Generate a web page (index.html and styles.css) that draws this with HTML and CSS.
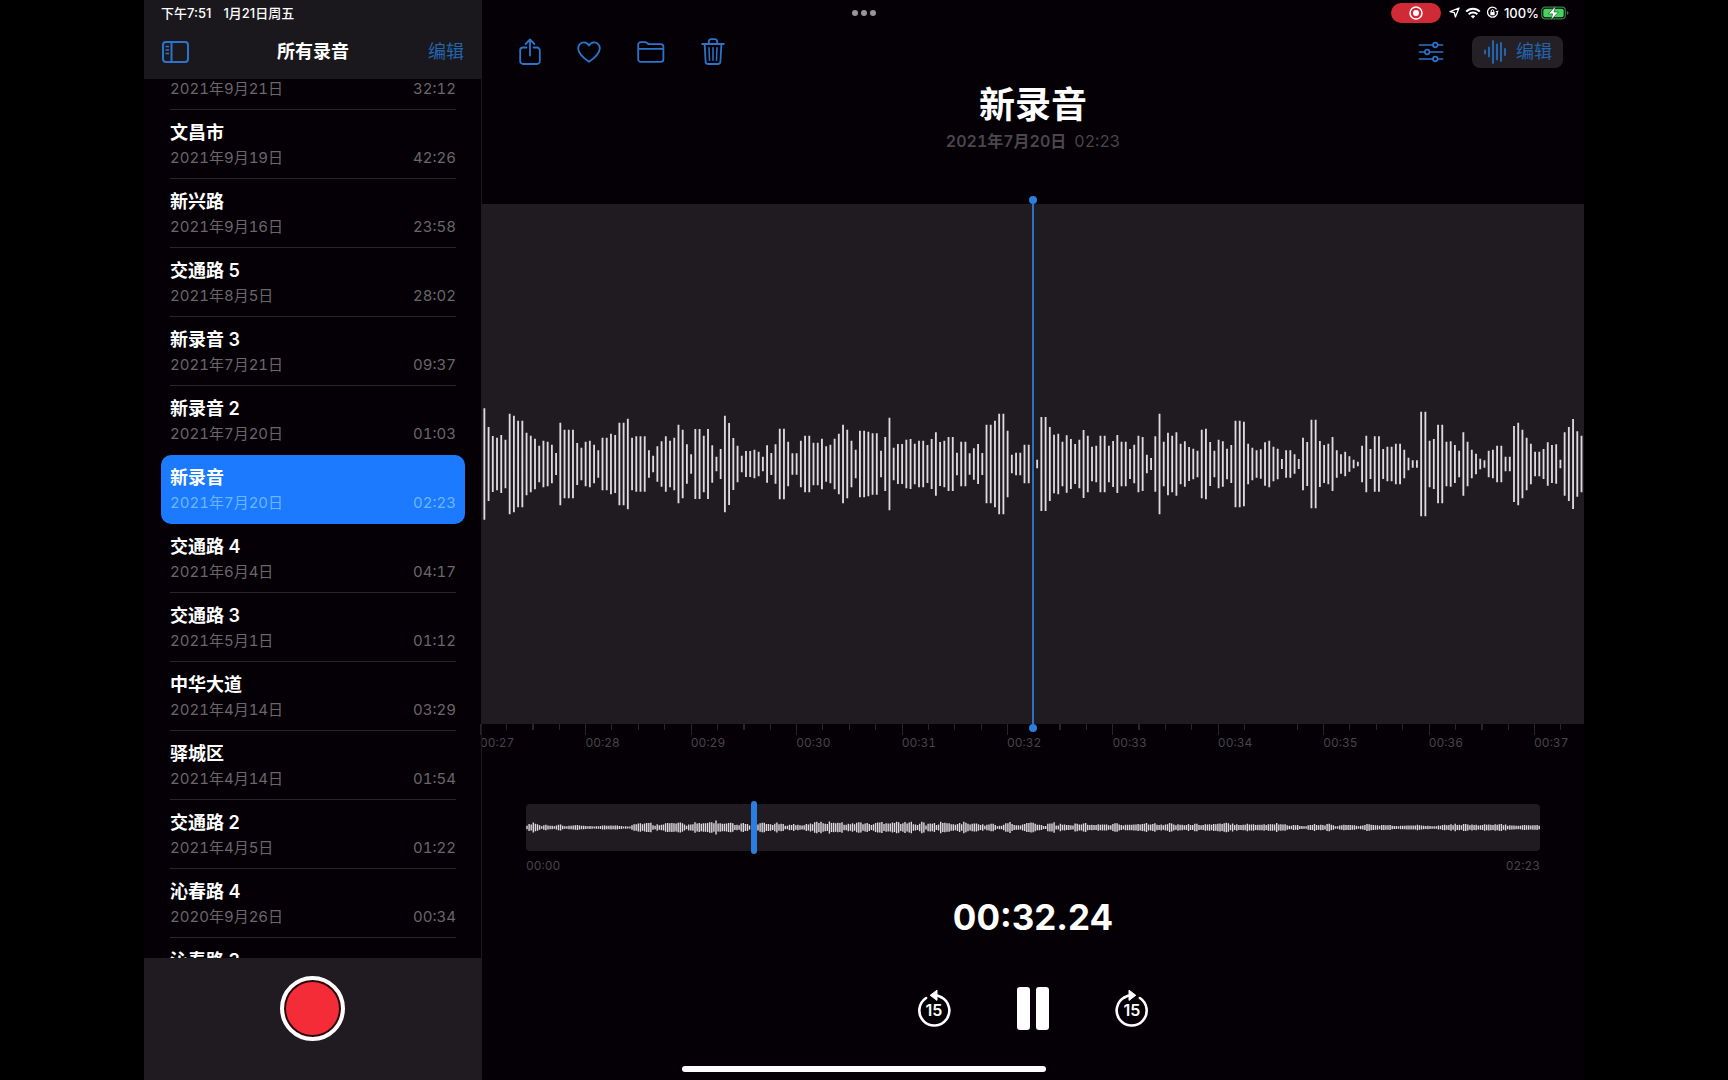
FILE: index.html
```html
<!DOCTYPE html>
<html lang="zh-CN">
<head>
<meta charset="utf-8">
<meta name="viewport" content="width=device-width, initial-scale=1">
<title>语音备忘录</title>
<link rel="stylesheet" href="styles.css">
</head>
<body>
<div class="device">
  <aside class="sidebar">
    <header class="sidebar-head">
      <div class="status"><span>下午7:51</span><span>1月21日周五</span></div>
      <div class="nav">
        <button class="icon-btn" aria-label="边栏">
          <svg width="28" height="22" viewBox="0 0 28 22" fill="none" stroke="currentColor" stroke-width="2"><rect x="1" y="1" width="25" height="20" rx="3"/><path d="M9.500 1v20"/><path d="M3.500 5.500h3.500M3.500 9h3.500M3.500 12.500h3.500" stroke-width="1.500"/></svg>
        </button>
        <h2 class="nav-title">所有录音</h2>
        <button class="text-btn">编辑</button>
      </div>
    </header>
    <ul class="list">
      <li class="row row-cut"><button class="rec"><span class="meta"><span>2021年9月21日</span><span>32:12</span></span></button></li>
      <li class="row"><button class="rec"><strong>文昌市</strong><span class="meta"><span>2021年9月19日</span><span>42:26</span></span></button></li>
      <li class="row"><button class="rec"><strong>新兴路</strong><span class="meta"><span>2021年9月16日</span><span>23:58</span></span></button></li>
      <li class="row"><button class="rec"><strong>交通路 5</strong><span class="meta"><span>2021年8月5日</span><span>28:02</span></span></button></li>
      <li class="row"><button class="rec"><strong>新录音 3</strong><span class="meta"><span>2021年7月21日</span><span>09:37</span></span></button></li>
      <li class="row row-plain"><button class="rec"><strong>新录音 2</strong><span class="meta"><span>2021年7月20日</span><span>01:03</span></span></button></li>
      <li class="row row-plain selected"><button class="rec"><strong>新录音</strong><span class="meta"><span>2021年7月20日</span><span>02:23</span></span></button></li>
      <li class="row"><button class="rec"><strong>交通路 4</strong><span class="meta"><span>2021年6月4日</span><span>04:17</span></span></button></li>
      <li class="row"><button class="rec"><strong>交通路 3</strong><span class="meta"><span>2021年5月1日</span><span>01:12</span></span></button></li>
      <li class="row"><button class="rec"><strong>中华大道</strong><span class="meta"><span>2021年4月14日</span><span>03:29</span></span></button></li>
      <li class="row"><button class="rec"><strong>驿城区</strong><span class="meta"><span>2021年4月14日</span><span>01:54</span></span></button></li>
      <li class="row"><button class="rec"><strong>交通路 2</strong><span class="meta"><span>2021年4月5日</span><span>01:22</span></span></button></li>
      <li class="row"><button class="rec"><strong>沁春路 4</strong><span class="meta"><span>2020年9月26日</span><span>00:34</span></span></button></li>
      <li class="row"><button class="rec"><strong>沁春路 3</strong></button></li>
    </ul>
    <footer class="sidebar-foot">
      <button class="record" aria-label="录音"></button>
    </footer>
  </aside>

  <main class="main">
    <div class="status status-right">
      <span class="rec-pill"><svg width="14" height="14" viewBox="0 0 14 14"><circle cx="7" cy="7" r="6" fill="none" stroke="#fff" stroke-width="1.500"/><circle cx="7" cy="7" r="3" fill="#fff"/></svg></span>
      <svg width="11" height="11" viewBox="0 0 11 11" fill="none" stroke="#fff" stroke-width="1.300" stroke-linejoin="round"><path d="M10 1 6.400 10 5.300 5.700 1 4.700z"/></svg>
      <svg width="16" height="12" viewBox="0 0 16 12" fill="none" stroke="#fff" stroke-width="2"><path d="M1.200 4.600a9.600 9.600 0 0 1 13.600 0M3.700 7.200a6.100 6.100 0 0 1 8.600 0"/><path d="M8 11.600 5.800 9.300a3.100 3.100 0 0 1 4.400 0z" fill="#fff" stroke="none"/></svg>
      <svg width="13" height="13" viewBox="0 0 13 13" fill="none" stroke="#fff" stroke-width="1.300"><path d="M10.600 3.300A5 5 0 1 0 11.500 6.500"/><path d="M12.700 4.600 11.500 7.300 9.400 5.200z" fill="#fff" stroke="none"/><rect x="4.300" y="6" width="4.400" height="3.200" rx=".5" fill="#fff" stroke="none"/><path d="M5.200 6V5a1.300 1.300 0 0 1 2.600 0v1" stroke-width="1"/></svg>
      <span>100%</span>
      <svg class="battery" width="28" height="14" viewBox="0 0 28 14"><rect x=".7" y="1.200" width="23.600" height="11.600" rx="3.500" fill="none" stroke="#3f7a4c" stroke-width="1.200"/><rect x="2.300" y="2.800" width="20.400" height="8.400" rx="2" fill="#43d35f"/><path d="M25.800 5v4c1.200-.5 1.700-1.200 1.700-2s-.5-1.500-1.700-2z" fill="#3f7a4c"/><path d="M14.600 0 7.300 7.900h4.300L10 14l7.500-8h-4.400z" fill="#fff" stroke="#1d3b24" stroke-width=".6"/></svg>
    </div>
    <nav class="toolbar">
      <button class="icon-btn" aria-label="共享"><svg width="22" height="28" viewBox="0 0 22 28" fill="none" stroke="currentColor" stroke-width="1.800" stroke-linecap="round" stroke-linejoin="round"><path d="M7.500 9.500H4A2.800 2.800 0 0 0 1.200 12.300v10.900A2.800 2.800 0 0 0 4 26h14a2.800 2.800 0 0 0 2.800-2.800V12.300A2.800 2.800 0 0 0 18 9.500h-3.500"/><path d="M11 17.500V2M6.600 6 11 1.500 15.400 6"/></svg></button>
      <button class="icon-btn" aria-label="喜爱"><svg width="24" height="22" viewBox="0 0 24 22" fill="none" stroke="currentColor" stroke-width="1.800" stroke-linejoin="round"><path d="M12 20.800C6 16.500 1.200 12.600 1.200 7.400 1.200 3.900 3.700 1.300 6.900 1.300c2.200 0 4 1.200 5.100 3.200 1.100-2 2.900-3.200 5.100-3.200 3.200 0 5.700 2.600 5.700 6.100 0 5.200-4.800 9.100-10.800 13.400z"/></svg></button>
      <button class="icon-btn" aria-label="文件夹"><svg width="28" height="22" viewBox="0 0 28 22" fill="none" stroke="currentColor" stroke-width="1.800" stroke-linejoin="round"><path d="M1.200 7.800V3.800A2.600 2.600 0 0 1 3.800 1.200h4.400c1.900 0 2.300 2 4.200 2h11.400a2.600 2.600 0 0 1 2.600 2.600v12.400a2.600 2.600 0 0 1-2.600 2.600H3.800a2.600 2.600 0 0 1-2.600-2.600zM1.200 7.800h25.200"/></svg></button>
      <button class="icon-btn" aria-label="删除"><svg width="24" height="28" viewBox="0 0 24 28" fill="none" stroke="currentColor" stroke-width="1.800" stroke-linecap="round" stroke-linejoin="round"><path d="M1.200 6h21.600M3.600 6l1 17.500A2.600 2.600 0 0 0 7.200 26h9.600a2.600 2.600 0 0 0 2.600-2.500l1-17.500"/><path d="M7.800 6V3.400A2.200 2.200 0 0 1 10 1.200h4a2.200 2.200 0 0 1 2.200 2.200V6"/><path d="m8 9.800.5 12.500M12 9.800v12.500m4-12.500-.5 12.500" stroke-width="1.500"/></svg></button>
      <span class="spacer"></span>
      <button class="icon-btn" aria-label="选项"><svg width="26" height="22" viewBox="0 0 26 22" fill="none" stroke="currentColor" stroke-width="1.700" stroke-linecap="round"><path d="M1.500 4h13.200M20 4h4.500M1.500 11h5M11.700 11h12.800M1.500 18h13.200M20 18h4.500"/><circle cx="17.300" cy="4" r="2.300"/><circle cx="9.100" cy="11" r="2.300"/><circle cx="17.300" cy="18" r="2.300"/></svg></button>
      <button class="edit-btn"><svg width="24" height="26" viewBox="0 0 24 26" fill="none" stroke="currentColor" stroke-width="2" stroke-linecap="round"><path d="M2 11.500v3M6 8.500v9M10 2v22M14 5.500v15M18 4v18M22 10v6"/></svg>编辑</button>
    </nav>

    <section class="heading">
      <h1>新录音</h1>
      <p><b>2021年7月20日</b><span>02:23</span></p>
    </section>

    <section class="wave">
      <svg id="wave" viewBox="0 0 3306 340" role="img" aria-label="波形"></svg>
      <i class="playhead"></i>
    </section>
    <div class="ruler">
      <span>00:27</span><span>00:28</span><span>00:29</span><span>00:30</span><span>00:31</span><span>00:32</span><span>00:33</span><span>00:34</span><span>00:35</span><span>00:36</span><span>00:37</span>
    </div>

    <section class="overview">
      <div class="track">
        <svg id="overview" viewBox="0 0 1014 20" role="img" aria-label="总览"></svg>
        <i class="thumb"></i>
      </div>
      <div class="range"><span>00:00</span><span>02:23</span></div>
    </section>

    <div class="clock">00:32.24</div>
    <div class="controls">
      <button class="ctl" aria-label="后退15秒"><svg width="36" height="40" viewBox="0 1 36 40"><path d="M25.200 9.200A15 15 0 1 1 10.100 10" fill="none" stroke="#fff" stroke-width="2.600" stroke-linecap="round"/><path d="M14.200 7.300 21 2.200v10.200z" fill="#fff" stroke="#fff" stroke-linejoin="round"/><path d="M18 7.300c3 0 5.500.8 7.500 2" fill="none" stroke="#fff" stroke-width="2.600" stroke-linecap="round"/><text x="18" y="28" text-anchor="middle">15</text></svg></button>
      <button class="ctl" aria-label="暂停"><svg width="34" height="44" viewBox="0 0 34 44" fill="#fff"><rect x="1" y="0" width="13" height="43" rx="3"/><rect x="20" y="0" width="13" height="43" rx="3"/></svg></button>
      <button class="ctl" aria-label="前进15秒"><svg width="36" height="40" viewBox="0 1 36 40"><path d="M10.800 9.200A15 15 0 1 0 25.900 10" fill="none" stroke="#fff" stroke-width="2.600" stroke-linecap="round"/><path d="M21.800 7.300 15 2.200v10.200z" fill="#fff" stroke="#fff" stroke-linejoin="round"/><path d="M18 7.300c-3 0-5.500.8-7.500 2" fill="none" stroke="#fff" stroke-width="2.600" stroke-linecap="round"/><text x="18" y="28" text-anchor="middle">15</text></svg></button>
    </div>
  </main>
  <span class="dots"><i></i><i></i><i></i></span>
  <span class="home-bar"></span>
</div>
<script src="wave.js"></script>
</body>
</html>
```
FILE: styles.css
```css
* { box-sizing: border-box; }
html { background: #000; }
body {
  margin: 0;
  background: #000;
  color: #fff;
  font-family: Inter, "Noto Sans CJK SC", sans-serif;
  font-size: 15px;
  line-height: 24px;
}
button {
  margin: 0;
  padding: 0;
  border: 0;
  background: none;
  color: inherit;
  font: inherit;
}
svg { display: block; flex: none; }
h1, h2, p, ul { margin: 0; padding: 0; }

.device {
  position: relative;
  display: grid;
  grid-template-columns: 338px minmax(0, 1fr);
  width: calc(100vh * 4 / 3);
  max-width: 100%;
  height: 100vh;
  margin: 0 auto;
  overflow: hidden;
  background: #040005;
}

/* Sidebar */
.sidebar {
  z-index: 1;
  display: flex;
  flex-direction: column;
  min-height: 0;
  border-right: 1px solid #1c181e;
}
.sidebar-head {
  height: 79px;
  background: #1b181d;
}
.status {
  display: flex;
  align-items: center;
  gap: 12px;
  height: 25px;
  padding: 0 17px;
  font-size: 13px;
  font-weight: 500;
}
.nav {
  display: grid;
  grid-template-columns: 1fr auto 1fr;
  align-items: center;
  height: 54px;
  padding: 0 17px 0 18px;
}
.nav-title { font-size: 18px; font-weight: 600; }
.icon-btn { color: #2b74c9; }
.nav .icon-btn { justify-self: start; }
.text-btn { justify-self: end; color: #2264ae; font-size: 18px; }

.list {
  flex: 1;
  min-height: 0;
  padding: 0 16px 0 17px;
  overflow: hidden;
  list-style: none;
}
.row { height: 69px; padding: 0 9px; }
.rec {
  display: flex;
  flex-direction: column;
  justify-content: flex-start;
  width: 100%;
  height: 100%;
  padding-top: 11px;
  border-bottom: 1px solid #29252b;
  text-align: left;
}
.rec strong { font-size: 18px; font-weight: 600; }
.meta {
  display: flex;
  justify-content: space-between;
  width: 100%;
  padding-top: 1px;
  color: #6a666c;
  font-variant-numeric: tabular-nums;
}
.row-cut { height: 31px; }
.row-cut .rec { padding-top: 0; }
.row-cut .meta { padding-top: 0; line-height: 20px; }
.row-plain .rec { border-bottom-color: transparent; }
.selected { border-radius: 10px; background: #1b7aff; }
.selected .meta { color: #6cb6ff; }

.sidebar-foot {
  display: flex;
  justify-content: center;
  height: 122px;
  padding-top: 18px;
  background: #1f1b20;
}
.record {
  width: 65px;
  height: 65px;
  border: 4px solid #fff;
  border-radius: 50%;
  background: #f42c38;
  box-shadow: inset 0 0 0 2px #1f0c10;
}

/* Player */
.main {
  display: flex;
  flex-direction: column;
  min-width: 0;
  min-height: 0;
}
.status-right { justify-content: flex-end; gap: 5px; padding: 0 15px; }
.status-right span { line-height: 16px; }
.battery { margin-left: -3px; }
.rec-pill {
  display: flex;
  align-items: center;
  justify-content: center;
  width: 50px;
  height: 20px;
  margin-right: 3px;
  border-radius: 10px;
  background: #cf2a36;
}
.toolbar {
  display: flex;
  align-items: center;
  gap: 36px;
  height: 54px;
  padding: 0 21px 0 37px;
}
.spacer { flex: 1; }
.edit-btn {
  display: flex;
  align-items: center;
  gap: 9px;
  height: 32px;
  margin-left: -8px;
  padding: 0 11px;
  border-radius: 8px;
  background: #242026;
  color: #2264ae;
  font-size: 18px;
}
.heading { height: 125px; text-align: center; }
.heading h1 { font-size: 36px; font-weight: 700; line-height: 52px; }
.heading p {
  display: flex;
  justify-content: center;
  gap: 8px;
  color: #4a464c;
  font-size: 16px;
  line-height: 20px;
  font-variant-numeric: tabular-nums;
}
.heading b { font-weight: 600; }

.wave {
  position: relative;
  display: flex;
  flex: 1;
  align-items: center;
  min-height: 0;
  background: #1f1b20;
}
.wave svg { width: 100%; height: auto; }
.playhead {
  position: absolute;
  top: 0;
  bottom: 0;
  left: 50%;
  width: 2px;
  margin-left: -1px;
  background: #2c6fc0;
}
.playhead::before,
.playhead::after {
  content: "";
  position: absolute;
  left: -3px;
  width: 8px;
  height: 8px;
  border-radius: 50%;
  background: #2b7de0;
}
.playhead::before { top: -8px; }
.playhead::after { bottom: -8px; }

.ruler {
  display: grid;
  grid-template-columns: repeat(10, 19fr) 9fr;
  height: 80px;
  margin-left: -2px;
  overflow: hidden;
}
.ruler,
.range {
  color: #48444a;
  font-size: 12px;
  line-height: 16px;
  font-variant-numeric: tabular-nums;
}
.ruler span {
  --step: 25%;
  min-width: 0;
  padding-top: 11px;
  background:
    linear-gradient(#28242a, #28242a) 0 0 / 1px 11px no-repeat,
    repeating-linear-gradient(to right, #28242a 0 1px, transparent 1px var(--step)) 0 0 / 100% 6px no-repeat;
}
/* The last second is cut a little short of its half */
.ruler span:last-child { --step: 53%; }

.overview { padding: 0 44px; }
.track {
  position: relative;
  display: flex;
  align-items: center;
  height: 47px;
  border-radius: 4px;
  background: #1f1b20;
}
.track svg { width: 100%; height: auto; }
.thumb {
  position: absolute;
  top: -3px;
  bottom: -3px;
  left: 22.500%;
  width: 6px;
  margin-left: -3px;
  border-radius: 3px;
  background: #2b7de0;
}
.range {
  display: flex;
  justify-content: space-between;
  padding-top: 7px;
}
.clock {
  padding-top: 21px;
  font-size: 35px;
  font-weight: 700;
  line-height: 44px;
  text-align: center;
}
.controls {
  display: flex;
  align-items: center;
  justify-content: center;
  gap: 64px;
  height: 141px;
  padding-bottom: 2px;
}
.ctl text { fill: #fff; font-size: 16px; font-weight: 600; }
.bars { stroke: #dedade; fill: none; }

/* Overlays */
.dots {
  position: absolute;
  top: 10px;
  left: 50%;
  display: flex;
  gap: 3px;
  transform: translateX(-50%);
}
.dots i { width: 6px; height: 6px; border-radius: 50%; background: #98949a; }
.home-bar {
  position: absolute;
  bottom: 8px;
  left: 50%;
  width: 364px;
  height: 6px;
  border-radius: 3px;
  background: #fff;
  transform: translateX(-50%);
}
```
FILE: wave.js
```js
// Half-height of every bar in the zoomed waveform, left to right.
const levels = [
  167,111,84,79,87,73,151,145,130,130,94,85,76,55,70,67,58,33,124,103,103,103,63,49,67,70,58,41,79,79,
  91,87,124,124,136,79,83,83,83,41,25,53,68,83,70,79,118,103,59,29,105,105,85,105,56,22,45,145,123,78,
  55,25,39,39,43,37,22,56,33,59,106,106,67,32,32,70,85,85,64,64,76,53,58,76,91,118,103,
  70,43,100,100,97,92,92,40,81,139,49,60,60,73,75,61,70,70,57,75,95,66,70,81,81,34,67,67,32,47,60,33,
  118,118,130,151,151,100,28,34,34,58,58,47,13,141,141,111,88,91,67,86,75,60,73,102,85,52,55,85,85,55,
  69,87,67,67,45,58,85,81,28,18,83,151,67,94,85,95,61,68,51,46,40,103,106,66,40,73,
  68,46,57,130,130,127,61,49,41,44,65,70,52,46,15,41,41,29,15,79,66,133,133,69,57,61,81,41,29,37,23,13,
  7,55,85,45,83,83,45,52,52,61,61,43,19,11,11,157,157,70,75,118,118,67,68,57,40,95,67,43,31,16,11,40,43,
  55,55,22,22,114,124,103,79,61,37,37,45,65,57,59,13,95,111,135,98,85
];

// Envelope of the whole recording: [position, half-height].
const envelope = [
  [0,2],[4,3],[7,5],[12,3],[15,1],[21,3],[27,1],[33,3],[38,1],[50,2],[61,1],[69,1],[88,2],[96,1],[105,1],
  [107,4],[125,4],[128,2],[138,4],[145,4],[155,4],[161,2],[168,5],[176,3],[184,5],[190,6],[197,3],[205,4],
  [210,2],[218,4],[224,2],[235,4],[245,3],[252,4],[260,2],[268,3],[275,2],[283,3],[291,5],[295,6],[300,4],
  [308,6],[317,4],[325,3],[331,5],[339,4],[346,3],[354,5],[363,5],[375,5],[381,4],[386,5],[392,3],[396,6],
  [400,2],[406,5],[411,2],[416,6],[421,4],[427,3],[434,4],[440,5],[446,3],[452,4],[459,2],[466,4],[471,1],
  [476,2],[483,5],[490,2],[495,2],[503,5],[513,3],
  [519,1],[522,4],[528,5],[530,2],[534,3],[537,2],[542,3],[547,2],[551,4],[559,4],[562,2],[571,3],[580,3],
  [585,2],[589,4],[598,2],[605,3],[618,4],[626,4],[632,3],[637,2],[643,4],[650,3],[655,3],[659,2],[664,3],
  [691,3],[700,4],[714,3],[732,3],[746,3],[750,4],[757,3],[762,2],[771,2],[780,1],[787,3],[794,2],[803,3],
  [810,1],[824,3],[832,1],[840,3],[850,2],[866,2],[871,1],[884,2],[900,2],[910,1],[914,2],[928,3],[943,3],
  [952,2],[962,3],[966,2],[973,3],[982,2],[1014,2]
];

function addPath(id, d, width) {
  const path = document.createElementNS('http://www.w3.org/2000/svg', 'path');
  path.setAttribute('class', 'bars');
  path.setAttribute('stroke-width', width);
  path.setAttribute('d', d);
  document.getElementById(id).append(path);
}

const PITCH = 12.66;
addPath('wave', levels.map((h, i) => `M${7 + i * PITCH} ${171 - h}v${h * 2}`).join(''), 5.5);

let d = '';
let k = 0;
for (let i = 0; i * 2.1 < 1013; i++) {
  const x = 1 + i * 2.1;
  while (k < envelope.length - 2 && envelope[k + 1][0] <= x) k++;
  const [x0, h0] = envelope[k];
  const [x1, h1] = envelope[k + 1];
  const t = (x - x0) / (x1 - x0 || 1);
  const noise = Math.abs(Math.sin(i * 12.9898) * 43758.5453) % 1;
  const h = (h0 + (h1 - h0) * t) * (0.65 + 0.55 * noise) + 0.3;
  d += `M${x} ${9.5 - h}v${h * 2}`;
}
addPath('overview', d, 1.4);
```
